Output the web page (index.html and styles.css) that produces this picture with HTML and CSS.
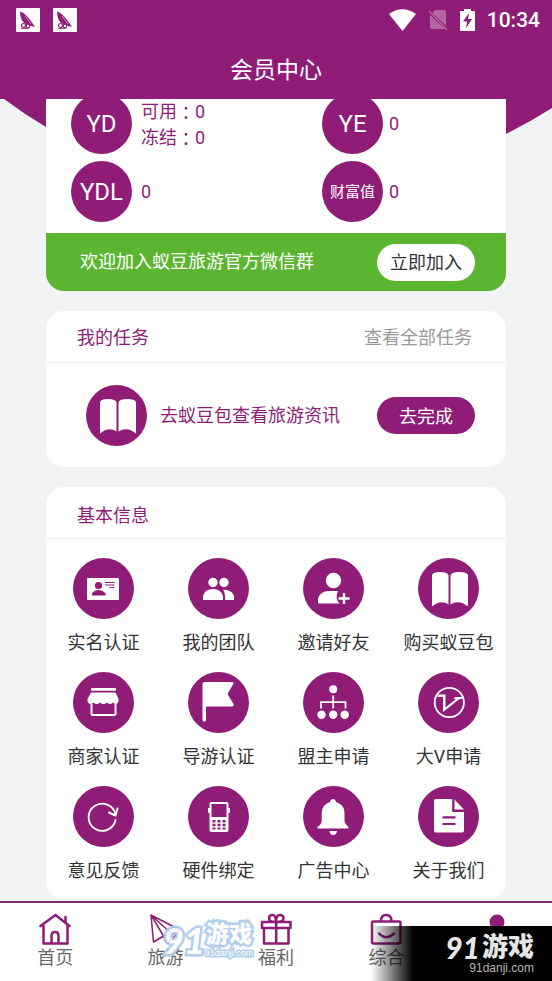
FILE: index.html
```html
<!DOCTYPE html>
<html lang="zh-CN">
<head>
<meta charset="utf-8">
<meta name="viewport" content="width=device-width, initial-scale=1">
<title>会员中心</title>
<link rel="stylesheet" href="styles.css">
</head>
<body>
<div class="app">
  <header class="top">
    <div class="status">
      <div class="status-group">
        <svg class="notice" viewBox="0 0 24 24"><rect width="24" height="24" rx="1" fill="#fff"/><path d="M4 3.500C9 5 13 10 19 19L15 18L8 15C5 12 4 7 4 3.500Z" fill="#8f1d77"/><path d="M9 8l6 8" stroke="#fff" stroke-width=".5"/><circle cx="7.500" cy="17.500" r="2" fill="#fff" stroke="#8f1d77" stroke-width="1.200"/><circle cx="12" cy="18" r="1.800" fill="#fff" stroke="#8f1d77" stroke-width="1.200"/><path d="M5 20.500h8" stroke="#8f1d77" stroke-width=".8"/></svg>
        <svg class="notice" viewBox="0 0 24 24"><rect width="24" height="24" rx="1" fill="#fff"/><path d="M4 3.500C9 5 13 10 19 19L15 18L8 15C5 12 4 7 4 3.500Z" fill="#8f1d77"/><path d="M9 8l6 8" stroke="#fff" stroke-width=".5"/><circle cx="7.500" cy="17.500" r="2" fill="#fff" stroke="#8f1d77" stroke-width="1.200"/><circle cx="12" cy="18" r="1.800" fill="#fff" stroke="#8f1d77" stroke-width="1.200"/><path d="M5 20.500h8" stroke="#8f1d77" stroke-width=".8"/></svg>
      </div>
      <div class="status-group signals">
        <svg class="wifi" viewBox="0 0 27 22"><path d="M0 5C8-1.500 19-1.500 27 5L13.500 22Z" fill="#fff"/></svg>
        <svg class="sim" viewBox="0 0 20 22"><path d="M7 1h9q2 0 2 2v14L4.500 4ZM2 6l15 14H4q-2 0-2-2Z" fill="#b465a4"/><path d="M1 2l18 19" stroke="#b465a4" stroke-width="1.500"/></svg>
        <svg class="battery" viewBox="0 0 15 22"><path d="M4 0h7v2h3q1 0 1 1v18q0 1-1 1H1q-1 0-1-1V3q0-1 1-1h3Z" fill="#fff"/><path d="M9 4L3 12.500h4L6 19l6-9H8Z" fill="#8f1d77"/></svg>
        <span class="time">10:34</span>
      </div>
    </div>
    <h1 class="title">会员中心</h1>
  </header>

  <main class="content">
    <svg class="curve" viewBox="0 0 552 100" preserveAspectRatio="none"><path d="M0 0H4Q24 15 46 28Q160 88 280 88Q400 88 506 35Q530 23 552 9V0Z" fill="#8f1d77"/></svg>

    <section class="card wallet">
      <div class="balances">
        <div class="balance"><span class="disc">YD</span><div class="amounts"><span class="amount">可用<i class="colon" lang="zh-TW">：</i>0</span><span class="amount">冻结<i class="colon" lang="zh-TW">：</i>0</span></div></div>
        <div class="balance tight"><span class="disc">YE</span><span>0</span></div>
        <div class="balance"><span class="disc">YDL</span><span>0</span></div>
        <div class="balance tight"><span class="disc disc-small">财富值</span><span>0</span></div>
      </div>
      <div class="banner"><span>欢迎加入蚁豆旅游官方微信群</span><button class="pill pill-light" type="button">立即加入</button></div>
    </section>

    <section class="card">
      <div class="card-head"><h2>我的任务</h2><a class="more" href="#">查看全部任务</a></div>
      <div class="task">
        <svg class="badge" viewBox="0 0 61 61"><circle cx="30.500" cy="30.500" r="30.500" fill="#8f1d77"/><path d="M14 17Q15 14 22 14Q29 14 30.500 17V46.500Q23 41 14 48.500ZM32.500 17Q34 14 41 14Q49 14 50 17V48.500Q41 41 32.500 46.500Z" fill="#fff"/></svg>
        <span class="task-name">去蚁豆包查看旅游资讯</span>
        <button class="pill pill-dark" type="button">去完成</button>
      </div>
    </section>

    <section class="card">
      <div class="card-head card-head-low"><h2>基本信息</h2></div>
      <div class="menu">
        <a class="entry" href="#"><svg class="badge" viewBox="0 0 61 61"><circle cx="30.500" cy="30.500" r="30.500" fill="#8f1d77"/><rect x="14" y="20" width="32" height="22" rx="1" fill="#fff"/><g fill="#8f1d77"><circle cx="25.500" cy="27.500" r="3.600"/><path d="M19 37.500V35.500Q21 32 25.500 32T32.500 35.500V37.500Z"/></g><path d="M32 24.500h9.500M32 27h9.500M36.500 29.500h5" stroke="#8f1d77" stroke-width="1.200"/></svg>实名认证</a>
        <a class="entry" href="#"><svg class="badge" viewBox="0 0 61 61"><circle cx="30.500" cy="30.500" r="30.500" fill="#8f1d77"/><g fill="#fff"><circle cx="25" cy="24.500" r="4.700"/><circle cx="36" cy="24.500" r="4.700"/><path d="M15 42V38Q17 31 25 31T35 38V42ZM35 31.500Q44 31.500 46 38V42H37V38Q37 34 35 31.500Z"/></g></svg>我的团队</a>
        <a class="entry" href="#"><svg class="badge" viewBox="0 0 61 61"><circle cx="30.500" cy="30.500" r="30.500" fill="#8f1d77"/><circle cx="30.500" cy="22.500" r="7.700" fill="#fff"/><path d="M15 45.500V41Q17 33 26 33H35Q31.500 40 36.500 45.500Z" fill="#fff"/><path d="M35.500 40.500h11M41 35v11" stroke="#fff" stroke-width="2.400"/></svg>邀请好友</a>
        <a class="entry" href="#"><svg class="badge" viewBox="0 0 61 61"><circle cx="30.500" cy="30.500" r="30.500" fill="#8f1d77"/><path d="M14 17Q15 14 22 14Q29 14 30.500 17V46.500Q23 41 14 48.500ZM32.500 17Q34 14 41 14Q49 14 50 17V48.500Q41 41 32.500 46.500Z" fill="#fff"/></svg>购买蚁豆包</a>

        <a class="entry" href="#"><svg class="badge" viewBox="0 0 61 61"><circle cx="30.500" cy="30.500" r="30.500" fill="#8f1d77"/><rect x="18" y="16" width="25" height="2.800" rx="1" fill="#fff"/><path d="M18 20.500H42.500L45.500 27V29.500Q43.500 34 40 30.500Q37.500 33.500 34 30.500Q30.500 33.500 27 30.500Q23.500 33.500 20.500 30.500Q17 34 14.500 29.500V27Z" fill="#fff"/><path d="M18.500 32V41.500Q18.500 43 20 43H41Q42.500 43 42.500 41.500V32" fill="none" stroke="#fff" stroke-width="2"/></svg>商家认证</a>
        <a class="entry" href="#"><svg class="badge" viewBox="0 0 61 61"><circle cx="30.500" cy="30.500" r="30.500" fill="#8f1d77"/><path d="M14.500 12Q14.500 10 16.500 10H44Q46.500 10 45 12.500L39.500 22L45.500 32Q46 34.500 44 34.500H18V48Q18 49.500 16.300 49.500T14.500 48Z" fill="#fff"/></svg>导游认证</a>
        <a class="entry" href="#"><svg class="badge" viewBox="0 0 61 61"><circle cx="30.500" cy="30.500" r="30.500" fill="#8f1d77"/><g fill="#fff"><circle cx="30.200" cy="17.300" r="4"/><circle cx="18.500" cy="42.700" r="4.200"/><circle cx="30.200" cy="42.700" r="4.200"/><circle cx="41.700" cy="42.700" r="4.200"/></g><path d="M30.200 23.500V36.500M18 36.500V30.200H42.500V36.500" fill="none" stroke="#fff" stroke-width="1.800"/></svg>盟主申请</a>
        <a class="entry" href="#"><svg class="badge" viewBox="0 0 61 61"><circle cx="30.500" cy="30.500" r="30.500" fill="#8f1d77"/><circle cx="31.300" cy="30.500" r="14.600" fill="none" stroke="#fff" stroke-width="1.800"/><path d="M20 22.500H27.500V35.500L38 27H35.500L37.500 25H45L44 27H41.500L25 40V25H19.500Z" fill="#fff"/></svg>大V申请</a>

        <a class="entry" href="#"><svg class="badge" viewBox="0 0 61 61"><circle cx="30.500" cy="30.500" r="30.500" fill="#8f1d77"/><path d="M42.500 34A13.600 13.600 0 1 1 42.500 28.500" fill="none" stroke="#fff" stroke-width="1.800" stroke-linecap="round"/><path d="M36 26.500L42.500 29.500L44.500 22.500" fill="none" stroke="#fff" stroke-width="2" stroke-linecap="round" stroke-linejoin="round"/></svg>意见反馈</a>
        <a class="entry" href="#"><svg class="badge" viewBox="0 0 61 61"><circle cx="30.500" cy="30.500" r="30.500" fill="#8f1d77"/><path d="M20 22h2v5h-2ZM40 22h2v5h-2Z" fill="#fff"/><rect x="21.500" y="16" width="19" height="30" rx="2" fill="#fff"/><g fill="#8f1d77"><path d="M23.500 18h15v13h-15Z"/><path d="M24.500 34h3v2.500h-3ZM29.500 34h3v2.500h-3ZM34.500 34h3v2.500h-3ZM24.500 37.800h3v2.500h-3ZM29.500 37.800h3v2.500h-3ZM34.500 37.800h3v2.500h-3ZM24.500 41.600h3v2h-3ZM29.500 41.600h3v2h-3ZM34.500 41.600h3v2h-3Z"/></g></svg>硬件绑定</a>
        <a class="entry" href="#"><svg class="badge" viewBox="0 0 61 61"><circle cx="30.500" cy="30.500" r="30.500" fill="#8f1d77"/><path d="M30 13Q32.500 13 33 16Q41.500 18.500 41.500 27V35Q42 38.500 45.500 41V42.500H14.500V41Q18.500 38.500 18.700 35V27Q19 18.500 27 16Q27.500 13 30 13ZM26.500 45H34Q33.500 49 30.200 49T26.500 45Z" fill="#fff"/></svg>广告中心</a>
        <a class="entry" href="#"><svg class="badge" viewBox="0 0 61 61"><circle cx="30.500" cy="30.500" r="30.500" fill="#8f1d77"/><path d="M18 13H34.200V26H46V44.500Q46 46.500 44 46.500H18Q16 46.500 16 44.500V15Q16 13 18 13ZM36.500 13.500L46 23.500H36.500Z" fill="#fff"/><path d="M24.500 31.300h13M24.500 38h13" stroke="#8f1d77" stroke-width="2.200"/></svg>关于我们</a>
      </div>
    </section>
  </main>

  <nav class="tabs">
    <a class="tab" href="#"><svg viewBox="0 0 32 32"><path d="M1.500 13L16.500 2L30.500 13M4.500 12V30.500H28.500V12M26.500 4V9M12.500 30V23Q12.500 19 16 19T19.500 23V30" /></svg>首页</a>
    <a class="tab" href="#"><svg class="thin" viewBox="0 0 32 32"><path d="M1 2L30 17L18 31L13.500 23L3.500 29ZM1 2L13.500 23L22 21L1 2M22 21L18 31M22 21L30 17"/></svg>旅游</a>
    <a class="tab" href="#"><svg viewBox="0 0 32 32"><path d="M2 9H30.500V15H2ZM4 15V30.500H28.500V15M16.200 9V30M16 9Q9 9 9 5.500Q9 2 12.500 2Q16 2 16 9Q16 2 20 2Q23.500 2 23.500 5.500Q23.500 9 16 9"/></svg>福利</a>
    <a class="tab" href="#"><svg viewBox="0 0 32 32"><path d="M3.500 8.500H29Q30.500 8.500 30.500 10V29Q30.500 30.500 29 30.500H3.500Q2 30.500 2 29V10Q2 8.500 3.500 8.500ZM11 8Q11 2 16.200 2T21.500 8M9 20.500Q16 28 24 20.500"/></svg>综合</a>
    <a class="tab" href="#" aria-label="我的"><svg class="solid" viewBox="0 0 32 32"><circle cx="16" cy="9" r="7.500"/><path d="M3 31Q4 18 16 18T29 31Z"/></svg></a>
    <div class="mark">
      <b class="mark-number">91</b>
      <div class="mark-words"><b class="mark-name">游戏</b><span class="mark-site">91danji.com</span></div>
    </div>
    <div class="stamp">
      <div class="stamp-name"><b class="stamp-number">91</b><b>游戏</b></div>
      <span class="stamp-site">91danji.com</span>
    </div>
  </nav>
</div>
</body>
</html>
```

FILE: styles.css
```css
:root {
  --brand: #8f1d77;
  --page: #f2f3f5;
  --green: #5cb531;
}

* {
  box-sizing: border-box;
}

body {
  margin: 0;
  background: var(--page);
  color: #333;
  font: 18px/26px Roboto, "Noto Sans CJK SC", sans-serif;
}

a {
  color: inherit;
  text-decoration: none;
}

button {
  border: 0;
  font: inherit;
}

svg {
  display: block;
}

.app {
  display: flex;
  flex-direction: column;
  min-height: 100vh;
}

.top {
  position: relative;
  z-index: 1;
  background: var(--brand);
  color: #fff;
  padding-bottom: 8px;
}

.status {
  display: flex;
  align-items: center;
  justify-content: space-between;
  height: 39px;
  padding: 0 12px 0 16px;
}

.status-group {
  display: flex;
  align-items: center;
  gap: 13px;
}

.signals {
  gap: 12px;
}

.notice {
  width: 24px;
  height: 24px;
}

.wifi {
  width: 27px;
  height: 22px;
}

.sim {
  width: 20px;
  height: 22px;
}

.battery {
  width: 15px;
  height: 22px;
}

.time {
  font-size: 21px;
  font-weight: 500;
}

.title {
  margin: 0;
  padding-top: 12px;
  font-size: 23px;
  font-weight: 400;
  line-height: 40px;
  text-align: center;
}

.content {
  position: relative;
  flex: 1;
  display: flex;
  flex-direction: column;
  gap: 20px;
  padding: 0 46px 2px;
  overflow: hidden;
}

.curve {
  position: absolute;
  top: 0;
  left: 0;
  width: 100%;
  height: 100px;
}

.card {
  position: relative;
  background: #fff;
  border-radius: 18px;
  overflow: hidden;
}

/* The wallet is scrolled partly under the title bar. */
.wallet {
  margin-top: -31px;
}

.balances {
  display: grid;
  grid-template-columns: 1fr 1fr;
  gap: 7px 92px;
  padding: 25px 25px 11px;
  color: var(--brand);
}

.balance {
  display: flex;
  align-items: center;
  gap: 9px;
  white-space: nowrap;
}

.tight {
  gap: 6px;
}

.amounts {
  padding-top: 2px;
}

.amount {
  display: flex;
}

.colon {
  font-family: "Noto Sans CJK TC", sans-serif;
  font-style: normal;
}

.disc {
  display: grid;
  place-items: center;
  flex: none;
  width: 61px;
  height: 61px;
  border-radius: 50%;
  background: var(--brand);
  color: #fff;
  font-size: 24px;
}

.disc-small {
  font-size: 15px;
}

.banner {
  display: flex;
  align-items: center;
  justify-content: space-between;
  height: 58px;
  padding: 0 31px 0 34px;
  background: var(--green);
  color: #fff;
}

.pill {
  width: 98px;
  height: 37px;
  padding: 2px 0 0;
  border-radius: 19px;
}

.pill-light {
  background: #fff;
  color: #333;
}

.pill-dark {
  background: var(--brand);
  color: #fff;
}

.card-head {
  display: flex;
  align-items: center;
  justify-content: space-between;
  height: 52px;
  padding: 3px 34px 0 31px;
  border-bottom: 1px solid #eee;
}

.card-head-low {
  padding-top: 7px;
}

.card-head h2 {
  margin: 0;
  color: var(--brand);
  font-size: 18px;
  font-weight: 400;
}

.more {
  color: #999;
}

.task {
  display: flex;
  align-items: center;
  gap: 13px;
  padding: 22px 31px 21px 40px;
  color: var(--brand);
}

.task .pill {
  margin-left: auto;
}

.badge {
  flex: none;
  width: 61px;
  height: 61px;
}

.menu {
  display: grid;
  grid-template-columns: repeat(4, 1fr);
  row-gap: 16px;
  padding: 19px 0 15px;
}

.entry {
  display: flex;
  flex-direction: column;
  align-items: center;
  gap: 11px;
}

.tabs {
  position: relative;
  display: grid;
  grid-template-columns: repeat(5, 1fr);
  height: 80px;
  padding-top: 10px;
  border-top: 2px solid #7d2a6c;
  background: #fff;
  color: #666;
}

.tab {
  display: flex;
  flex-direction: column;
  align-items: center;
}

.tab svg {
  width: 32px;
  height: 32px;
  fill: none;
  stroke: var(--brand);
  stroke-width: 2.5;
  stroke-linecap: round;
  stroke-linejoin: round;
}

.tab .thin {
  stroke-width: 1.5;
}

.tab .solid {
  fill: var(--brand);
  stroke: none;
}

.mark,
.stamp {
  position: absolute;
  display: flex;
}

.mark {
  top: 18px;
  left: 163px;
  align-items: center;
  color: #fff;
  -webkit-text-stroke: 5px #a9caec;
  paint-order: stroke fill;
  opacity: 0.9;
}

.mark-number {
  font: italic 900 36px/38px Lato, sans-serif;
}

.mark-words {
  display: flex;
  flex-direction: column;
  align-items: center;
}

.mark-name {
  font-size: 23px;
  font-weight: 900;
  line-height: 26px;
}

.mark-site {
  font: 9px/10px "Liberation Sans", sans-serif;
  -webkit-text-stroke-width: 3px;
}

.stamp {
  right: 0;
  bottom: 0;
  width: 181px;
  height: 55px;
  flex-direction: column;
  align-items: flex-end;
  justify-content: center;
  padding: 0 18px 0 0;
  background: linear-gradient(90deg, transparent, #000 42px);
  color: #e6e6e6;
}

.stamp-name {
  display: flex;
  gap: 2px;
  font-size: 26px;
  font-weight: 900;
  line-height: 28px;
}

.stamp-number {
  font: italic 900 30px/28px Lato, sans-serif;
}

.stamp-site {
  color: #b5b5b5;
  font: 12px/14px "Liberation Sans", sans-serif;
}
```
